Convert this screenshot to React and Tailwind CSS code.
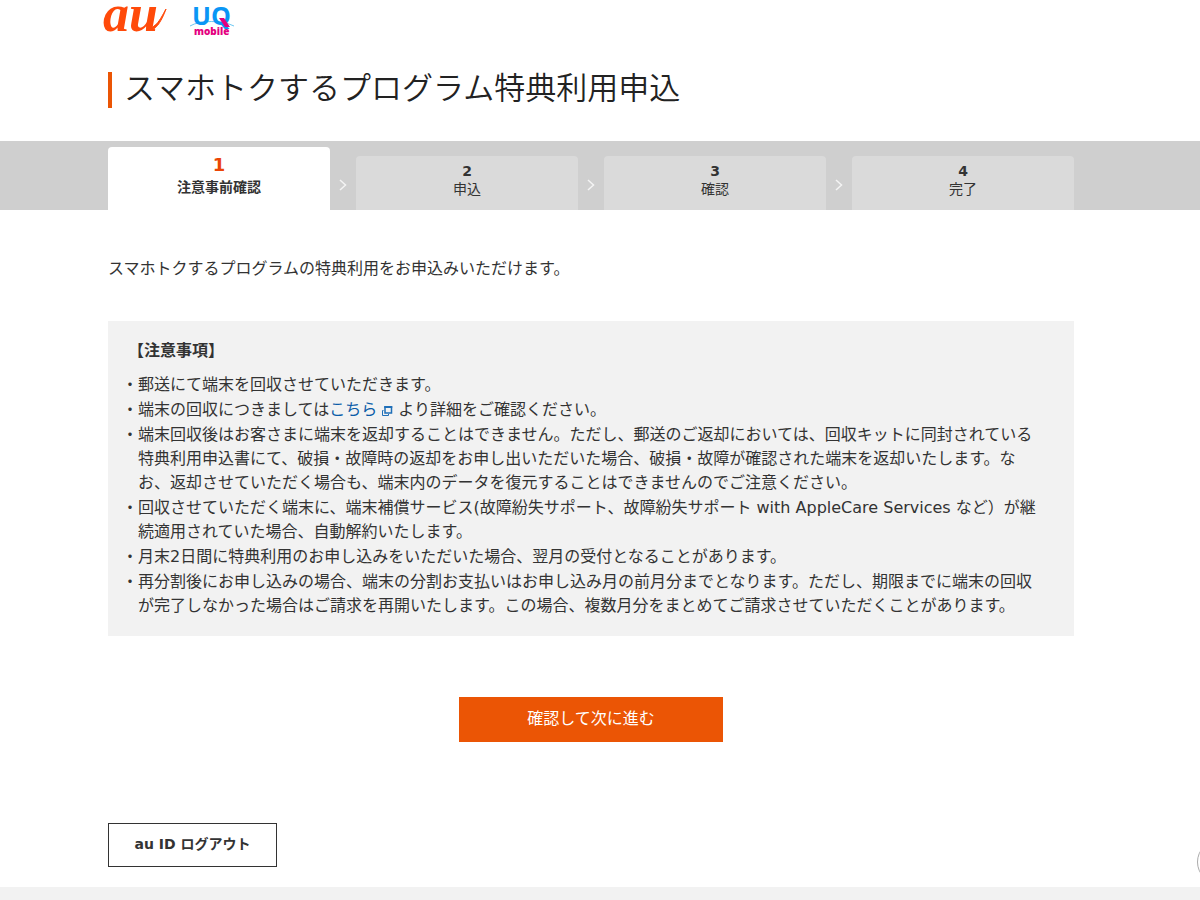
import React from "react";

const steps = [
  { no: 1, label: "注意事前確認" },
  { no: 2, label: "申込" },
  { no: 3, label: "確認" },
  { no: 4, label: "完了" },
];

const notes = [
  "郵送にて端末を回収させていただきます。",
  <>
    端末の回収につきましては
    <a href="#kaishu" className="text-[#0a5ca8]">
      こちら
      <WindowIcon />
    </a>{" "}
    より詳細をご確認ください。
  </>,
  "端末回収後はお客さまに端末を返却することはできません。ただし、郵送のご返却においては、回収キットに同封されている特典利用申込書にて、破損・故障時の返却をお申し出いただいた場合、破損・故障が確認された端末を返却いたします。なお、返却させていただく場合も、端末内のデータを復元することはできませんのでご注意ください。",
  "回収させていただく端末に、端末補償サービス(故障紛失サポート、故障紛失サポート with AppleCare Services など）が継続適用されていた場合、自動解約いたします。",
  "月末2日間に特典利用のお申し込みをいただいた場合、翌月の受付となることがあります。",
  "再分割後にお申し込みの場合、端末の分割お支払いはお申し込み月の前月分までとなります。ただし、期限までに端末の回収が完了しなかった場合はご請求を再開いたします。この場合、複数月分をまとめてご請求させていただくことがあります。",
];

function WindowIcon() {
  return (
    <svg className="ml-1 inline-block h-3 w-3 align-[-2px]" viewBox="0 0 12 12" fill="none" stroke="#1f6fb8" aria-hidden="true">
      <path d="M4 2h6.500v6H4z" strokeWidth="1.500" />
      <path d="M3.250 2h8" strokeWidth="2" />
      <path d="M2.500 5.500h-1v5h6v-1.500" />
    </svg>
  );
}

function AuLogo() {
  return (
    <svg className="h-10 w-[72px]" viewBox="0 0 72 40" role="img" aria-label="au">
      <g fontFamily="Liberation Serif, serif" fontWeight="700" fontStyle="italic" fontSize="52" fill="#ff4a0a">
        <text x="5" y="31">a</text>
        <text x="31" y="31">u</text>
      </g>
      <path d="M51 30C58 31 64 20 68 9C65 14 61 23 56 26Z" fill="#ff4a0a" stroke="#ff4a0a" strokeWidth="1" />
    </svg>
  );
}

function UqLogo() {
  return (
    <svg className="h-10 w-12" viewBox="0 0 48 40" role="img" aria-label="UQ mobile">
      <path d="M2 26C12 20 34 20 46 26" fill="none" stroke="#6cc8f2" strokeWidth="1" />
      <text x="4" y="25" fontFamily="Open Sans, sans-serif" fontWeight="700" fontSize="25" fill="#0a96f5">
        UQ
      </text>
      <path d="M31 18h5l6 9h-5z" fill="#e4007f" />
      <text x="6" y="35" fontFamily="Open Sans, sans-serif" fontWeight="800" fontSize="10" fill="#e4007f">
        mobile
      </text>
    </svg>
  );
}

const StepBar = () => {
  return (
    <div className="bg-[#cfcfcf] pl-[18px] pr-9">
      <ol className="mx-auto flex h-[69px] max-w-[966px] items-end text-center">
        {steps.map((s, i) => (
          <React.Fragment key={s.no}>
            {i > 0 && (
              <li aria-hidden="true" className="flex h-[54px] w-[26px] shrink-0 items-center justify-center pt-1">
                <svg className="h-3 w-2" viewBox="0 0 8 12" fill="none" stroke="#f4f4f4" strokeWidth="1.5">
                  <path d="M1 1l5.500 5L1 11" />
                </svg>
              </li>
            )}
            {i === 0 ? (
              <li aria-current="step" className="h-[63px] flex-1 rounded-t-sm bg-white pt-2 font-bold">
                <p className="text-lg leading-5 text-[#eb4505]">{s.no}</p>
                <p className="text-sm leading-6">{s.label}</p>
              </li>
            ) : (
              <li className="h-[54px] flex-1 rounded-t-sm bg-[#dadada] pt-1.5">
                <p className="text-sm leading-[18px] font-bold">{s.no}</p>
                <p className="text-sm leading-[18px]">{s.label}</p>
              </li>
            )}
          </React.Fragment>
        ))}
      </ol>
    </div>
  );
};

export default function App() {
  return (
    <div className="min-h-screen overflow-x-hidden bg-white font-['DejaVu_Sans','Noto_Sans_CJK_JP',sans-serif] text-base text-[#333]" lang="ja">
      <header className="pl-[18px] pr-9">
        <div className="mx-auto max-w-[966px]">
          <div className="-ml-2.5 flex gap-[18px]">
            <AuLogo />
            <UqLogo />
          </div>
          <h1 className="mt-8 mb-[33px] border-l-4 border-[#eb5505] pb-1 pl-3 text-[31px] leading-8 font-[350] text-[#222]">
            スマホトクするプログラム特典利用申込
          </h1>
        </div>
      </header>

      <StepBar />

      <main className="pl-[18px] pr-9">
        <div className="mx-auto max-w-[966px]">
          <p className="mt-[47px] leading-6">スマホトクするプログラムの特典利用をお申込みいただけます。</p>

          <section className="mt-10 bg-[#f2f2f2] pt-[18px] pr-9 pb-[18px] pl-4">
            <h2 className="pl-1 leading-6 font-bold">【注意事項】</h2>
            <ul className="mt-2.5 flex flex-col gap-px leading-6">
              {notes.map((note, i) => (
                <li key={i} className="flex">
                  <span className="mr-0.5 flex w-3 shrink-0 justify-center">・</span>
                  <div>{note}</div>
                </li>
              ))}
            </ul>
          </section>

          <div className="mt-[61px] flex justify-center">
            <button type="button" className="h-[45px] w-[264px] bg-[#eb5505] pb-0.5 text-white">
              確認して次に進む
            </button>
          </div>

          <button type="button" className="mt-[81px] mb-5 h-11 w-[169px] border border-[#333] pb-0.5 text-sm font-bold">
            au ID ログアウト
          </button>
        </div>
      </main>

      <footer className="h-[13px] bg-[#f2f2f2]" />

      <button
        type="button"
        aria-label="ページトップへ"
        className="fixed -right-[41px] bottom-4 h-11 w-11 rounded-full border border-[#aaa] bg-white"
      />
    </div>
  );
}
